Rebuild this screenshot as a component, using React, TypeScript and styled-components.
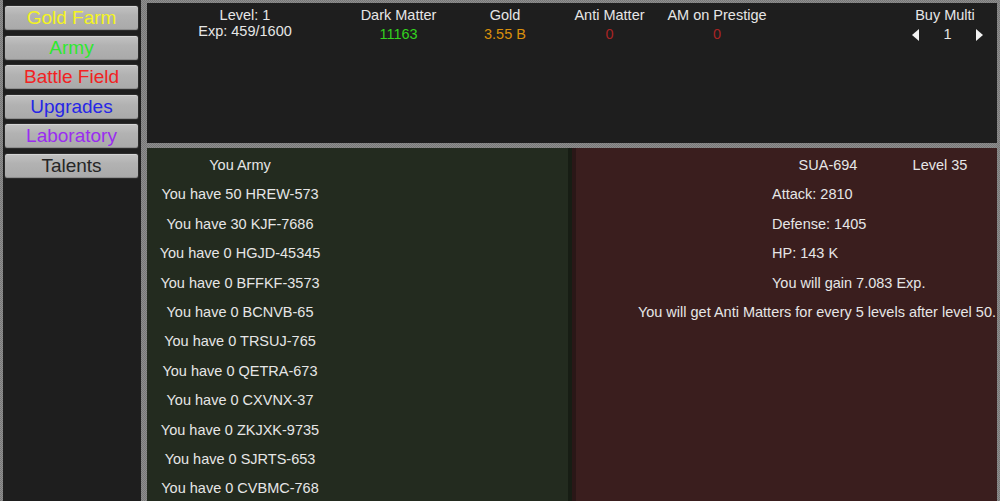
import React from 'react';
import styled, { createGlobalStyle } from 'styled-components';

const GlobalStyle = createGlobalStyle`
  html, body {
    margin: 0;
    padding: 0;
    background: #1e1e1e;
  }
  * {
    box-sizing: border-box;
  }
`;

const Screen = styled.div`
  width: 1000px;
  height: 501px;
  overflow: hidden;
  display: flex;
  padding: 0 3px;
  gap: 6px;
  font-family: 'Liberation Sans', Arial, sans-serif;
  font-size: 14.5px;
  color: #e6e6e6;
  background: repeating-conic-gradient(#8e8e8e 0 25%, #777 0 50%) 0 0 / 2px 2px;
`;

const Sidebar = styled.nav`
  width: 138px;
  flex-shrink: 0;
  background: #1e1e1e;
  padding: 5px 2px 0 1px;
  display: flex;
  flex-direction: column;
  gap: 3.5px;
`;

const NavButton = styled.button<{ $color: string }>`
  height: 26px;
  width: 100%;
  margin: 0;
  padding: 0;
  border: 1px solid #2c2c2c;
  border-radius: 3px;
  background: linear-gradient(#c2c2c2, #b2b2b2 40%, #a9a9a9);
  box-shadow: inset 0 1px 0 #d4d4d4, inset 0 -1px 0 #8e8e8e;
  font-family: 'Liberation Sans', Arial, sans-serif;
  font-size: 19px;
  line-height: 24px;
  color: ${p => p.$color};
  text-align: center;
`;

const Main = styled.div`
  flex: 1;
  min-height: 0;
  display: flex;
  flex-direction: column;
  gap: 5px;
  padding-top: 3px;
`;

const TopPanel = styled.header`
  height: 140px;
  flex-shrink: 0;
  background: #1e1e1e;
  padding-top: 3px;
  display: grid;
  grid-template-columns: 196px 111px 102px 107px 108px 1fr 104px;
  align-items: start;
`;

const Stat = styled.div<{ $tight?: boolean }>`
  display: flex;
  flex-direction: column;
  align-items: center;
  white-space: nowrap;
  line-height: ${p => (p.$tight ? '16px' : '19px')};
  margin-top: ${p => (p.$tight ? '1px' : '0')};
`;

const Value = styled.span<{ $color: string }>`
  color: ${p => p.$color};
`;

const Spacer = styled.div``;

const Stepper = styled.div`
  width: 72px;
  margin-left: 5px;
  display: flex;
  align-items: center;
  justify-content: space-between;
`;

const Arrow = ({ dir }: { dir: 'left' | 'right' }) => (
  <svg width="8" height="12" viewBox="0 0 8 12">
    <polygon points={dir === 'left' ? '7,0 7,12 0,6' : '1,0 1,12 8,6'} fill="#f2f2f2" />
  </svg>
);

const Battle = styled.section`
  flex: 1;
  min-height: 0;
  overflow: hidden;
  display: flex;
`;

const ArmySide = styled.div`
  width: 425px;
  background: #232b1f;
  border-right: 4px solid #171d14;
  padding-top: 3px;
`;

const EnemySide = styled.div`
  flex: 1;
  background: #3a1e1e;
  border-left: 4px solid #2a1717;
  padding-top: 3px;
`;

const Column = styled.div`
  width: 186px;
  display: flex;
  flex-direction: column;
  align-items: center;
`;

const Row = styled.div`
  height: 29.4px;
  line-height: 29.4px;
  white-space: nowrap;
`;

const EnemyHeader = styled.div`
  margin-left: 196px;
  display: grid;
  grid-template-columns: 112px 112px;
  text-align: center;
  height: 29.4px;
  line-height: 29.4px;
`;

const EnemyStat = styled(Row)`
  padding-left: 196px;
`;

const Note = styled(Row)`
  text-align: right;
  padding-right: 1px;
`;

const navItems = [
  { label: 'Gold Farm', color: '#f4f422' },
  { label: 'Army', color: '#2ee82e' },
  { label: 'Battle Field', color: '#f22222' },
  { label: 'Upgrades', color: '#2626e6' },
  { label: 'Laboratory', color: '#9a2cf0' },
  { label: 'Talents', color: '#262626' },
];

const army = [
  'You have 50 HREW-573',
  'You have 30 KJF-7686',
  'You have 0 HGJD-45345',
  'You have 0 BFFKF-3573',
  'You have 0 BCNVB-65',
  'You have 0 TRSUJ-765',
  'You have 0 QETRA-673',
  'You have 0 CXVNX-37',
  'You have 0 ZKJXK-9735',
  'You have 0 SJRTS-653',
  'You have 0 CVBMC-768',
];

export default function App() {
  return (
    <>
      <GlobalStyle />
      <Screen>
        <Sidebar>
          {navItems.map(item => (
            <NavButton key={item.label} $color={item.color}>
              {item.label}
            </NavButton>
          ))}
        </Sidebar>
        <Main>
          <TopPanel>
            <Stat $tight>
              <span>Level: 1</span>
              <span>Exp: 459/1600</span>
            </Stat>
            <Stat>
              <span>Dark Matter</span>
              <Value $color="#33d21e">11163</Value>
            </Stat>
            <Stat>
              <span>Gold</span>
              <Value $color="#d98f0c">3.55 B</Value>
            </Stat>
            <Stat>
              <span>Anti Matter</span>
              <Value $color="#a82424">0</Value>
            </Stat>
            <Stat>
              <span>AM on Prestige</span>
              <Value $color="#a82424">0</Value>
            </Stat>
            <Spacer />
            <Stat>
              <span>Buy Multi</span>
              <Stepper>
                <Arrow dir="left" />
                <span>1</span>
                <Arrow dir="right" />
              </Stepper>
            </Stat>
          </TopPanel>
          <Battle>
            <ArmySide>
              <Column>
                <Row>You Army</Row>
                {army.map(line => (
                  <Row key={line}>{line}</Row>
                ))}
              </Column>
            </ArmySide>
            <EnemySide>
              <EnemyHeader>
                <span>SUA-694</span>
                <span>Level 35</span>
              </EnemyHeader>
              <EnemyStat>Attack: 2810</EnemyStat>
              <EnemyStat>Defense: 1405</EnemyStat>
              <EnemyStat>HP: 143 K</EnemyStat>
              <EnemyStat>You will gain 7.083 Exp.</EnemyStat>
              <Note>You will get Anti Matters for every 5 levels after level 50.</Note>
            </EnemySide>
          </Battle>
        </Main>
      </Screen>
    </>
  );
}
